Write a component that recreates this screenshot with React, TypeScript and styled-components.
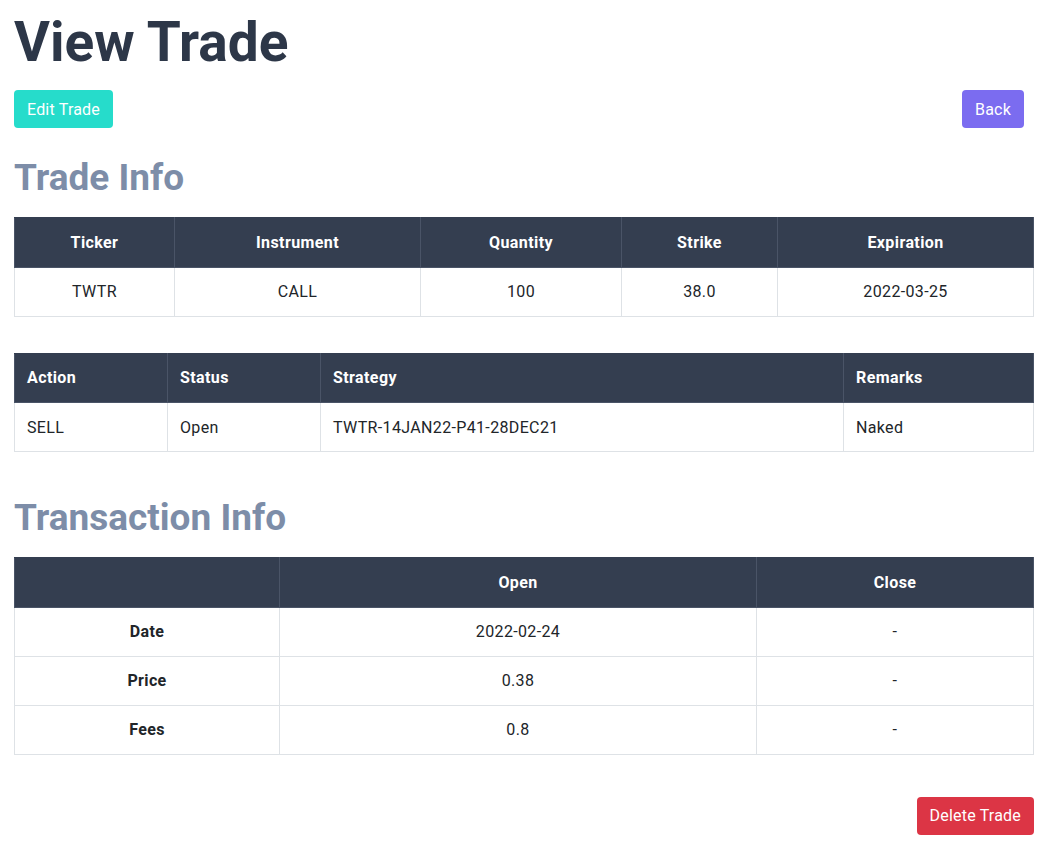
import React from "react";
import styled, { createGlobalStyle } from "styled-components";

const Global = createGlobalStyle`
  html, body { margin: 0; padding: 0; background: #fff; }
  body { font-family: Roboto, "Liberation Sans", sans-serif; color: #212529; }
`;

const Page = styled.div`
  padding: 0 15px 0 14px;
  display: flex;
  flex-direction: column;
`;

const Title = styled.h1`
  margin: 10px 0 0;
  font-size: 55px;
  line-height: 64px;
  font-weight: 700;
  color: #2d3748;
`;

const ButtonRow = styled.div`
  display: flex;
  justify-content: space-between;
  align-items: center;
  margin-top: 16px;
`;

const Button = styled.button<{ $bg: string; $mr?: number }>`
  height: 38px;
  padding: 0 13px;
  border: none;
  border-radius: 4px;
  background: ${(p) => p.$bg};
  color: #fff;
  font-family: inherit;
  font-size: 16px;
  letter-spacing: 0.2px;
  margin-right: ${(p) => p.$mr ?? 0}px;
  cursor: pointer;
`;

const SectionTitle = styled.h2<{ $mt: number }>`
  margin: ${(p) => p.$mt}px 0 0;
  font-size: 37px;
  line-height: 44px;
  font-weight: 700;
  color: #7d8da8;
`;

const Table = styled.table<{ $mt: number }>`
  width: 100%;
  border-collapse: collapse;
  margin-top: ${(p) => p.$mt}px;
`;

const Th = styled.th<{ $align?: string; $w?: number }>`
  background: #343e50;
  color: #fff;
  font-weight: 700;
  font-size: 16px;
  letter-spacing: 0.4px;
  height: 49.6px;
  padding: 0 12px;
  text-align: ${(p) => p.$align ?? "center"};
  border: 1px solid #4a5467;
  border-top-color: #343e50;
  width: ${(p) => (p.$w ? `${p.$w}px` : "auto")};
  box-sizing: border-box;
`;

const Td = styled.td<{ $align?: string; $bold?: boolean }>`
  height: 49px;
  padding: 0 12px;
  text-align: ${(p) => p.$align ?? "center"};
  font-weight: ${(p) => (p.$bold ? 700 : 400)};
  font-size: 16px;
  letter-spacing: 0.35px;
  border: 1px solid #dee2e6;
  box-sizing: border-box;
  color: #212529;
`;

const Footer = styled.div`
  display: flex;
  justify-content: flex-end;
  margin-top: 42px;
`;

export default function App() {
  return (
    <>
      <Global />
      <Page>
        <Title>View Trade</Title>
        <ButtonRow>
          <Button $bg="#26dccb">Edit Trade</Button>
          <Button $bg="#7b6cf0" $mr={10}>Back</Button>
        </ButtonRow>

        <SectionTitle $mt={28}>Trade Info</SectionTitle>
        <Table $mt={17}>
          <thead>
            <tr>
              <Th $w={160}>Ticker</Th>
              <Th $w={246}>Instrument</Th>
              <Th $w={201}>Quantity</Th>
              <Th $w={156}>Strike</Th>
              <Th>Expiration</Th>
            </tr>
          </thead>
          <tbody>
            <tr>
              <Td>TWTR</Td>
              <Td>CALL</Td>
              <Td>100</Td>
              <Td>38.0</Td>
              <Td>2022-03-25</Td>
            </tr>
          </tbody>
        </Table>

        <Table $mt={36}>
          <thead>
            <tr>
              <Th $align="left" $w={153}>Action</Th>
              <Th $align="left" $w={153}>Status</Th>
              <Th $align="left" $w={523}>Strategy</Th>
              <Th $align="left">Remarks</Th>
            </tr>
          </thead>
          <tbody>
            <tr>
              <Td $align="left">SELL</Td>
              <Td $align="left">Open</Td>
              <Td $align="left">TWTR-14JAN22-P41-28DEC21</Td>
              <Td $align="left">Naked</Td>
            </tr>
          </tbody>
        </Table>

        <SectionTitle $mt={44}>Transaction Info</SectionTitle>
        <Table $mt={17}>
          <thead>
            <tr>
              <Th $w={265}></Th>
              <Th $w={477}>Open</Th>
              <Th>Close</Th>
            </tr>
          </thead>
          <tbody>
            <tr>
              <Td $bold>Date</Td>
              <Td>2022-02-24</Td>
              <Td>-</Td>
            </tr>
            <tr>
              <Td $bold>Price</Td>
              <Td>0.38</Td>
              <Td>-</Td>
            </tr>
            <tr>
              <Td $bold>Fees</Td>
              <Td>0.8</Td>
              <Td>-</Td>
            </tr>
          </tbody>
        </Table>

        <Footer>
          <Button $bg="#dc3545">Delete Trade</Button>
        </Footer>
      </Page>
    </>
  );
}
